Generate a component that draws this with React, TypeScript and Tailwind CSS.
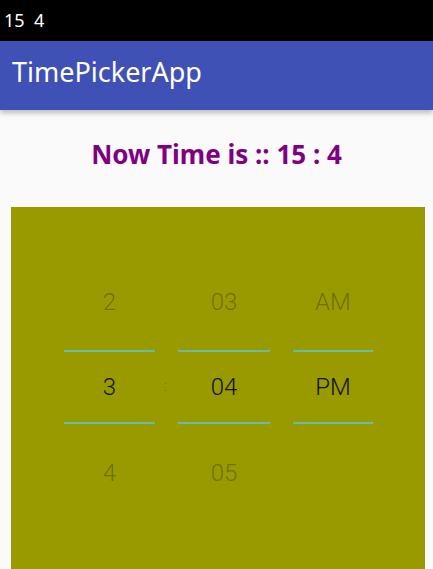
const HOURS = ['2', '3', '4']
const MINUTES = ['03', '04', '05']
const PERIODS = ['AM', 'PM', '']

function PickerColumn({ values, width }: { values: string[]; width: string }) {
    return (
        <div className={`flex flex-col ${width}`}>
            <div className="flex h-[44px] items-center justify-center text-black/30">{values[0]}</div>
            <div className="mt-[26px] h-[2px] bg-[#68bcae]" />
            <div className="flex h-[70px] items-center justify-center text-[#111]">{values[1]}</div>
            <div className="h-[2px] bg-[#68bcae]" />
            <div className="mt-[27px] flex h-[44px] items-center justify-center text-black/30">{values[2]}</div>
        </div>
    )
}

export default function App() {
    return (
        <div className="flex h-[569px] w-[433px] flex-col overflow-hidden bg-[#fafafa] font-['Noto_Sans',sans-serif]">
            <div className="flex h-[41px] shrink-0 items-center whitespace-pre bg-black pl-[4px] text-[18px] text-white">
                15  4
            </div>
            <div className="flex h-[69px] shrink-0 items-center bg-[#3f51b5] pb-[6px] pl-[12px] text-[27px] text-white shadow-[0_3px_5px_rgba(0,0,0,0.25)]">
                TimePickerApp
            </div>
            <div className="flex h-[97px] shrink-0 items-center justify-center pb-[8px] text-[26px] font-bold text-[#800080]">
                Now Time is :: 15 : 4
            </div>
            <div className="ml-[11px] mr-[8px] flex-1 bg-[#999900]">
                <div className="flex pl-[53px] pt-[73px] font-['Roboto',sans-serif] text-[24px] font-light">
                    <PickerColumn values={HOURS} width="w-[91px]" />
                    <div className="flex w-[23px] flex-col">
                        <div className="h-[72px]" />
                        <div className="flex h-[70px] items-center justify-center pb-[2px] pr-[2px] text-[14px] text-black/30">
                            :
                        </div>
                    </div>
                    <PickerColumn values={MINUTES} width="w-[92px]" />
                    <div className="w-[23px]" />
                    <PickerColumn values={PERIODS} width="w-[80px]" />
                </div>
            </div>
        </div>
    )
}
